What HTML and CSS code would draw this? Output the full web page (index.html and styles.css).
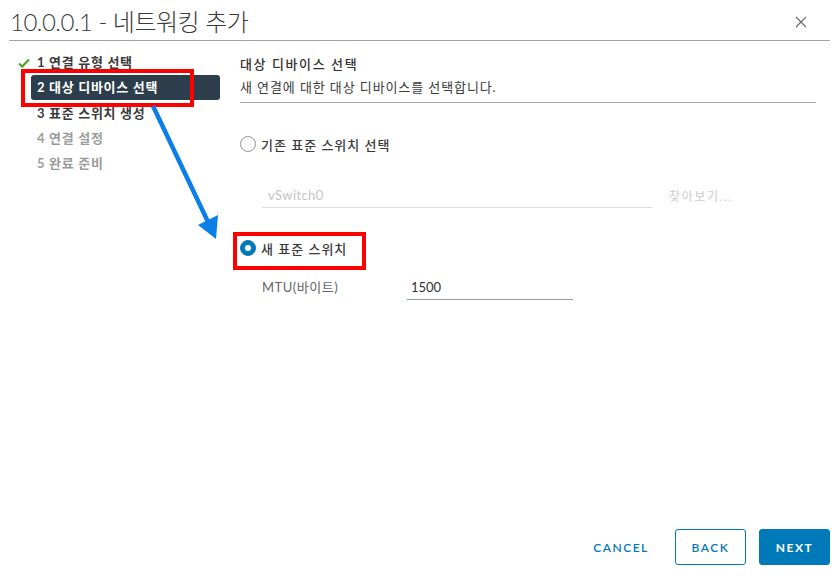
FILE: index.html
```html
<!doctype html>
<html lang="ko">
  <head>
    <meta charset="UTF-8" />
    <meta name="viewport" content="width=device-width, initial-scale=1.0" />
    <title>네트워킹 추가</title>
    <link rel="stylesheet" href="styles.css">
  </head>
  <body>
    <div class="modal">

      <div class="modal-header">
        <h3 class="modal-title">10.0.0.1 - 네트워킹 추가</h3>
        <button class="close" aria-label="닫기">
          <svg width="12" height="12" viewBox="0 0 12 12"><path d="M1 1 L11 11 M11 1 L1 11" stroke="#6b6b6b" stroke-width="1.2" fill="none"/></svg>
        </button>
      </div>

      <div class="modal-body">
        <ul class="steps">
          <li class="step done">
            <svg class="check" width="12" height="10" viewBox="0 0 12 10"><path d="M1 5.5 L4.2 8.5 L11 1.5" stroke="#4aa21d" stroke-width="2.2" fill="none"/></svg>
            1 연결 유형 선택
          </li>
          <li class="step active">2 대상 디바이스 선택</li>
          <li class="step">3 표준 스위치 생성</li>
          <li class="step disabled">4 연결 설정</li>
          <li class="step disabled">5 완료 준비</li>
        </ul>

        <div class="page">
          <div class="page-head">
            <h4>대상 디바이스 선택</h4>
            <p>새 연결에 대한 대상 디바이스를 선택합니다.</p>
          </div>

          <label class="radio"><span class="radio-dot"></span>기존 표준 스위치 선택</label>
          <div class="switch-row">
            <div class="field field-disabled">vSwitch0</div>
            <span class="browse">찾아보기...</span>
          </div>

          <label class="radio checked"><span class="radio-dot"></span>새 표준 스위치</label>
          <div class="mtu-row">
            <span class="mtu-label">MTU(바이트)</span>
            <div class="field field-mtu">1500</div>
          </div>
        </div>
      </div>

      <div class="modal-footer">
        <button class="btn btn-link">CANCEL</button>
        <button class="btn btn-outline">BACK</button>
        <button class="btn btn-primary">NEXT</button>
      </div>

      <!-- annotations -->
      <div class="mark mark-step"></div>
      <div class="mark mark-radio"></div>
      <svg class="pointer" width="839" height="579" viewBox="0 0 839 579">
        <line x1="153" y1="106" x2="209" y2="224" stroke="#0a7fe8" stroke-width="4.5"/>
        <polygon points="216,239 218,215 198,225" fill="#0a7fe8"/>
      </svg>
    </div>
  </body>
</html>
```

FILE: styles.css
```css
* {
  box-sizing: border-box;
}
body {
  margin: 0;
  background-color: #ffffff;
  font-family: "Lato", "Noto Sans CJK KR", sans-serif;
  color: #313131;
}
.modal {
  position: relative;
  width: 839px;
  height: 579px;
  display: flex;
  flex-direction: column;
}

/* header */
.modal-header {
  display: flex;
  align-items: center;
  justify-content: space-between;
  height: 41px;
  margin: 0 9px;
  border-bottom: 1px solid #a3a3a3;
}
.modal-title {
  margin: 0;
  font-size: 24px;
  font-weight: 300;
  color: #3a3a3a;
  letter-spacing: -0.5px;
  padding-left: 1px;
}
.close {
  background: none;
  border: 0;
  padding: 0;
  margin: 3px 23px 0 0;
  width: 12px;
  height: 12px;
  display: flex;
}

/* body */
.modal-body {
  flex: 1;
  display: flex;
}
.steps {
  list-style: none;
  margin: 0 20px 0 31px;
  padding: 9px 0 0 0;
  width: 189px;
}
.step {
  position: relative;
  height: 24px;
  line-height: 24px;
  margin-bottom: 1px;
  padding-left: 6px;
  font-size: 13px;
  font-weight: 700;
  letter-spacing: 0.7px;
  color: #3a3a3a;
  border-radius: 3px;
}
.step .check {
  position: absolute;
  left: -13px;
  top: 8px;
}
.step.active {
  height: 25px;
  line-height: 25px;
  background-color: #2c3e4b;
  color: #ffffff;
}
.step.disabled {
  color: #9b9b9b;
}

.page {
  width: 576px;
  padding-top: 14px;
}
.page-head {
  border-bottom: 1px solid #a8a8a8;
  padding-bottom: 6px;
}
.page-head h4 {
  margin: 0;
  font-size: 13px;
  line-height: 18px;
  font-weight: 500;
  letter-spacing: 1.6px;
  color: #313131;
}
.page-head p {
  margin: 5px 0 0 0;
  font-size: 13px;
  line-height: 18px;
  letter-spacing: 0.9px;
  color: #3a3a3a;
}

.radio {
  display: flex;
  align-items: center;
  height: 20px;
  font-size: 13px;
  font-weight: 500;
  letter-spacing: 1px;
  color: #3a3a3a;
}
.radio-dot {
  width: 16px;
  height: 16px;
  border: 1px solid #999999;
  border-radius: 50%;
  margin-right: 5px;
  background-color: #ffffff;
  position: relative;
}
.radio:first-of-type {
  margin-top: 31px;
}
.radio.checked {
  margin-top: 30px;
}
.radio.checked .radio-dot {
  border-color: #0079b8;
  background-color: #0079b8;
}
.radio.checked .radio-dot::after {
  content: "";
  position: absolute;
  left: 4px;
  top: 4px;
  width: 6px;
  height: 6px;
  border-radius: 50%;
  background-color: #ffffff;
}

.field {
  font-size: 13px;
  height: 24px;
  line-height: 22px;
  border-bottom: 1px solid #9a9a9a;
}
.switch-row {
  display: flex;
  align-items: flex-end;
  margin: 30px 0 0 22px;
}
.field-disabled {
  width: 390px;
  padding-left: 6px;
  color: #c4c4c4;
  letter-spacing: 0.4px;
  border-bottom-color: #dcdcdc;
}
.browse {
  margin-left: 17px;
  margin-bottom: 4px;
  font-size: 12px;
  color: #cccccc;
  letter-spacing: 1.6px;
}
.mtu-row {
  display: flex;
  align-items: flex-end;
  margin: 18px 0 0 22px;
}
.mtu-label {
  width: 145px;
  font-size: 13px;
  line-height: 22px;
  margin-bottom: 2px;
  letter-spacing: 0.5px;
  color: #666666;
}
.field-mtu {
  width: 166px;
  padding-left: 4px;
  color: #313131;
}

/* footer */
.modal-footer {
  display: flex;
  justify-content: flex-end;
  gap: 12px;
  padding: 0 9px 14px 0;
}
.btn {
  height: 36px;
  width: 71px;
  border-radius: 3px;
  font-family: "Lato", sans-serif;
  font-size: 12px;
  font-weight: 700;
  letter-spacing: 1.5px;
  padding: 0;
  cursor: pointer;
}
.btn-link {
  width: 84px;
  background: none;
  border: 0;
  color: #0079b8;
  font-weight: 600;
}
.btn-outline {
  background-color: #ffffff;
  border: 1px solid #0079b8;
  color: #0079b8;
  font-weight: 600;
}
.btn-primary {
  background-color: #0079b8;
  border: 1px solid #0079b8;
  color: #ffffff;
  margin-left: 1px;
}

/* annotations drawn over the screenshot */
.mark {
  position: absolute;
  border: 4px solid #ff0000;
}
.mark-step {
  left: 21px;
  top: 69px;
  width: 173px;
  height: 38px;
}
.mark-radio {
  left: 233px;
  top: 232px;
  width: 133px;
  height: 38px;
}
.pointer {
  position: absolute;
  left: 0;
  top: 0;
  pointer-events: none;
}
```
